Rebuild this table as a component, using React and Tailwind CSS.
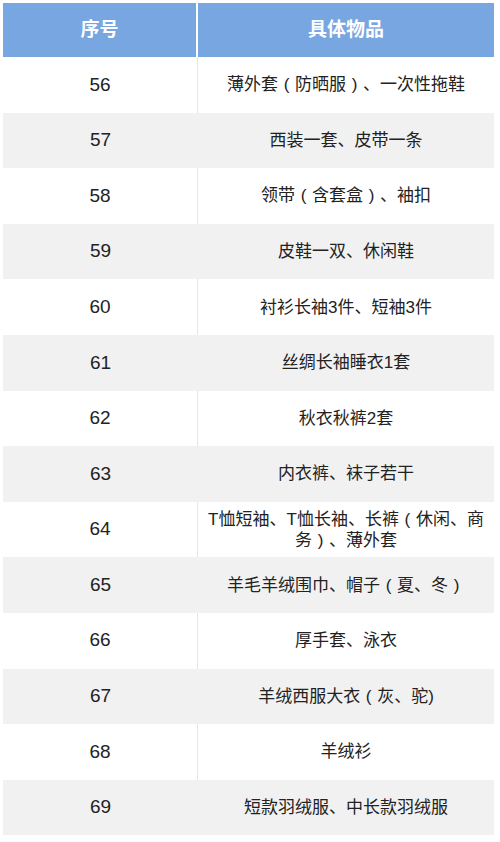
import React from 'react';

const ROWS = [
    { no: 56, item: '薄外套（防晒服）、一次性拖鞋' },
    { no: 57, item: '西装一套、皮带一条' },
    { no: 58, item: '领带（含套盒）、袖扣' },
    { no: 59, item: '皮鞋一双、休闲鞋' },
    { no: 60, item: '衬衫长袖3件、短袖3件' },
    { no: 61, item: '丝绸长袖睡衣1套' },
    { no: 62, item: '秋衣秋裤2套' },
    { no: 63, item: '内衣裤、袜子若干' },
    { no: 64, item: ['T恤短袖、T恤长袖、长裤（休闲、商', '务）、薄外套'] },
    { no: 65, item: '羊毛羊绒围巾、帽子（夏、冬）' },
    { no: 66, item: '厚手套、泳衣' },
    { no: 67, item: '羊绒西服大衣（灰、驼)' },
    { no: 68, item: '羊绒衫' },
    { no: 69, item: '短款羽绒服、中长款羽绒服' },
];

// full-width brackets drawn centred in a 1em box, like the reference font
const Line = ({ text }) => (
    <span>
        {text.split(/([（）])/).map((part, i) => {
            if (part === '（') return <span key={i} className="inline-block w-[1em] text-center">(</span>;
            if (part === '）') return <span key={i} className="inline-block w-[1em] text-center">)</span>;
            return part;
        })}
    </span>
);

const App = () => {
    return (
        <div className="w-[500px] h-[842px] bg-white pt-[3px] pl-[3px] font-['Liberation_Sans','Noto_Sans_CJK_SC',sans-serif] text-[#222]">
            <div className="w-[491px]">
                {/* Header */}
                <div className="grid grid-cols-[195px_1fr] h-[54px] text-white text-[19px] font-bold">
                    <div className="bg-[#77a6e0] flex items-center justify-center border-r-2 border-white">序号</div>
                    <div className="bg-[#77a6e0] flex items-center justify-center">具体物品</div>
                </div>

                {ROWS.map((r, i) => (
                    <div
                        key={r.no}
                        className={i % 2 === 0
                            ? 'grid grid-cols-[195px_1fr] h-[55.6px] bg-white'
                            : 'grid grid-cols-[195px_1fr] h-[55.6px] bg-[#f1f1f1]'}
                    >
                        <div className={i % 2 === 0
                            ? 'flex items-center justify-center text-[19px] border-r border-[#e6e6e6]'
                            : 'flex items-center justify-center text-[19px]'}>
                            {r.no}
                        </div>
                        <div className="flex flex-col items-center justify-center text-[17px] leading-[21px] text-center">
                            {Array.isArray(r.item)
                                ? r.item.map(line => <Line key={line} text={line} />)
                                : <Line text={r.item} />}
                        </div>
                    </div>
                ))}
            </div>
        </div>
    );
};

export default App;
